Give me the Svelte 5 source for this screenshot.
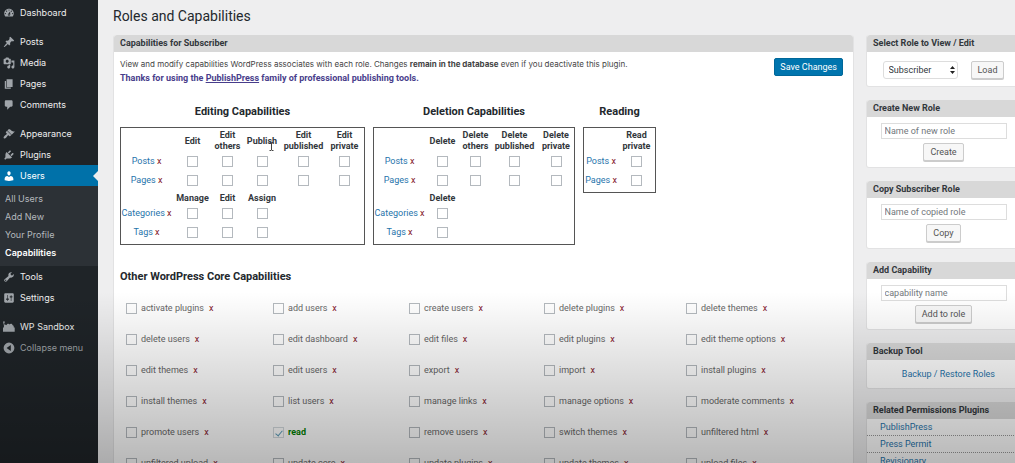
<script>
    const menu = [
        {
            label: "Dashboard",
            icon: "M3.76 16h12.48c1.1-1.37 1.76-3.11 1.76-5 0-4.42-3.58-8-8-8s-8 3.58-8 8c0 1.89.66 3.63 1.76 5zM10 4c.55 0 1 .45 1 1s-.45 1-1 1-1-.45-1-1 .45-1 1-1zM6 6c.55 0 1 .45 1 1s-.45 1-1 1-1-.45-1-1 .45-1 1-1zm8 0c.55 0 1 .45 1 1s-.45 1-1 1-1-.45-1-1 .45-1 1-1zm-5.37 5.55L12 7v6c0 1.1-.9 2-2 2s-2-.9-2-2c0-.57.24-1.08.63-1.45zM4 10c.55 0 1 .45 1 1s-.45 1-1 1-1-.45-1-1 .45-1 1-1zm12 0c.55 0 1 .45 1 1s-.45 1-1 1-1-.45-1-1 .45-1 1-1zm-5 3c0-.55-.45-1-1-1s-1 .45-1 1 .45 1 1 1 1-.45 1-1z",
        },
        {
            label: "Posts",
            gap: true,
            icon: "M10.44 3.02l1.82-1.82 6.36 6.35-1.83 1.82c-1.05-.68-2.48-.57-3.41.36l-.75.75c-.92.93-1.04 2.35-.35 3.41l-1.83 1.82-2.41-2.41-2.8 2.79c-.42.42-3.38 2.71-3.8 2.29s1.86-3.39 2.28-3.81l2.79-2.79L4.1 9.36l1.83-1.82c1.05.69 2.48.57 3.4-.36l.75-.75c.93-.92 1.05-2.35.36-3.41z",
        },
        {
            label: "Media",
            icon: "M13 11V4c0-.55-.45-1-1-1h-1.67L9 1H5L3.67 3H2c-.55 0-1 .45-1 1v7c0 .55.45 1 1 1h10c.55 0 1-.45 1-1zM7 4.5c1.38 0 2.5 1.12 2.5 2.5S8.38 9.5 7 9.5 4.5 8.38 4.5 7 5.62 4.5 7 4.5zM14 6h5v10.5c0 1.38-1.12 2.5-2.5 2.5S14 17.88 14 16.5s1.12-2.5 2.5-2.5c.17 0 .34.02.5.05V9h-3V6zm-4 8.05V13h2v3.5c0 1.38-1.12 2.5-2.5 2.5S7 17.88 7 16.5 8.12 14 9.5 14c.17 0 .34.02.5.05z",
        },
        {
            label: "Pages",
            icon: "M6 15V2h10v13H6zm-1 1h8v2H3V5h2v11z",
        },
        {
            label: "Comments",
            icon: "M5 2h9c1.1 0 2 .9 2 2v7c0 1.1-.9 2-2 2h-2l-5 5v-5H5c-1.1 0-2-.9-2-2V4c0-1.1.9-2 2-2z",
        },
        {
            label: "Appearance",
            gap: true,
            icon: "M14.48 11.06L7.41 3.99l1.5-1.5c.5-.56 2.3-.47 3.51.32 1.21.8 1.43 1.28 2.91 2.1 1.18.64 2.45 1.26 4.45.85zm-.71.71L6.7 4.7 4.93 6.47c-.39.39-.39 1.02 0 1.41l1.06 1.06c.39.39.39 1.03 0 1.42-.6.6-1.43 1.11-2.21 1.69-.35.26-.7.53-1.01.84C1.43 14.23.4 16.08 1.4 17.07c.99 1 2.84-.03 4.18-1.36.31-.31.58-.66.85-1.02.57-.78 1.08-1.61 1.69-2.21.39-.39 1.02-.39 1.41 0l1.06 1.06c.39.39 1.02.39 1.41 0z",
        },
        {
            label: "Plugins",
            icon: "M13.11 4.36L9.87 7.6 8 5.73l3.24-3.24c.35-.34 1.05-.2 1.56.32.52.51.66 1.21.31 1.55zm-8 1.77l.91-1.12 9.01 9.01-1.19.84c-.71.71-2.63 1.16-3.82 1.16H6.14L4.9 17.26c-.59.59-1.54.59-2.12 0-.59-.58-.59-1.53 0-2.12l1.24-1.24v-3.88c0-1.13.4-3.19 1.09-3.89zm7.26 3.97l3.24-3.24c.34-.35 1.04-.21 1.55.31.52.51.66 1.21.31 1.55l-3.24 3.25z",
        },
        {
            label: "Users",
            sub: ["All Users", "Add New", "Your Profile", "Capabilities"],
            icon: "M10 9.25c-2.27 0-2.73-3.44-2.73-3.44C7 4.02 7.82 2 9.97 2c2.16 0 2.98 2.02 2.71 3.81 0 0-.41 3.44-2.68 3.44zm0 2.57L12.72 10c2.39 0 4.52 2.33 4.52 4.53v2.49s-3.65 1.13-7.24 1.13c-3.65 0-7.24-1.13-7.24-1.13v-2.49c0-2.25 1.94-4.48 4.47-4.48z",
        },
        {
            label: "Tools",
            icon: "M16.68 9.77c-1.34 1.34-3.3 1.67-4.95.99l-5.41 6.52c-.99.99-2.59.99-3.58 0s-.99-2.59 0-3.57l6.52-5.42c-.68-1.65-.35-3.61.99-4.95 1.28-1.28 3.12-1.62 4.72-1.06l-2.89 2.89 2.82 2.82 2.86-2.87c.53 1.58.18 3.39-1.08 4.65zM3.81 16.21c.4.39 1.04.39 1.43 0 .4-.4.4-1.04 0-1.43-.39-.4-1.03-.4-1.43 0-.39.39-.39 1.03 0 1.43z",
        },
        {
            label: "Settings",
            icon: "M18 16V4c0-1.1-.9-2-2-2H4c-1.1 0-2 .9-2 2v12c0 1.1.9 2 2 2h12c1.1 0 2-.9 2-2zM8 11h1c.55 0 1 .45 1 1s-.45 1-1 1H8v1.5c0 .28-.22.5-.5.5s-.5-.22-.5-.5V13H6c-.55 0-1-.45-1-1s.45-1 1-1h1V5.5c0-.28.22-.5.5-.5s.5.22.5.5V11zm5-2h-1c-.55 0-1-.45-1-1s.45-1 1-1h1V5.5c0-.28.22-.5.5-.5s.5.22.5.5V7h1c.55 0 1 .45 1 1s-.45 1-1 1h-1v5.5c0 .28-.22.5-.5.5s-.5-.22-.5-.5V9z",
        },
        {
            label: "WP Sandbox",
            gap: true,
            icon: "M0 1h3v2H1.800L3 7c1-1 2-1 3 0c1-3 4-3 5-1c1-2 4-2 5 1c2 0 2 2 2 4h1.500v7H0v-7h1.500V7z",
        },
    ];

    const groups = [
        {
            title: "Editing Capabilities",
            cols: [51, 41, 29, 40, 43, 39],
            sections: [
                {
                    heads: ["Edit", "Edit others", "Publish", "Edit published", "Edit private"],
                    rows: ["Posts", "Pages"],
                },
                {
                    heads: ["Manage", "Edit", "Assign"],
                    rows: ["Categories", "Tags"],
                },
            ],
        },
        {
            title: "Deletion Capabilities",
            cols: [51, 35, 31, 47, 36],
            sections: [
                {
                    heads: ["Delete", "Delete others", "Delete published", "Delete private"],
                    rows: ["Posts", "Pages"],
                },
                {
                    heads: ["Delete"],
                    rows: ["Categories", "Tags"],
                },
            ],
        },
        {
            title: "Reading",
            cols: [34, 37],
            sections: [{ heads: ["Read private"], rows: ["Posts", "Pages"] }],
        },
    ];

    let caps = [
        "activate plugins", "add users", "create users", "delete plugins", "delete themes",
        "delete users", "edit dashboard", "edit files", "edit plugins", "edit theme options",
        "edit themes", "edit users", "export", "import", "install plugins",
        "install themes", "list users", "manage links", "manage options", "moderate comments",
        "promote users", "read", "remove users", "switch themes", "unfiltered html",
        "unfiltered upload", "update core", "update plugins", "update themes", "upload files",
    ].map((name) => ({ name, on: name === "read" }));

    const related = ["PublishPress", "Press Permit", "Revisionary"];

    let role = "Subscriber";
    let newRole = "";
    let copiedRole = "";
    let newCap = "";

    const sum = (list) => list.reduce((a, b) => a + b, 0);
</script>

<div class="page">
    <nav class="sidebar">
        {#each menu as item}
            <a href="#top" class="item" class:gap={item.gap} class:current={item.sub}>
                <svg viewBox="0 0 20 20" fill-rule="evenodd"><path d={item.icon} /></svg>
                {item.label}
            </a>
            {#if item.sub}
                <div class="submenu">
                    {#each item.sub as sub}
                        <a href="#top" class:active={sub === "Capabilities"}>{sub}</a>
                    {/each}
                </div>
            {/if}
        {/each}
        <button class="item collapse">
            <svg viewBox="0 0 20 20" fill-rule="evenodd">
                <path d="M10 1a9 9 0 1 0 0 18a9 9 0 0 0 0-18zM13 5v10l-7-5z" />
            </svg>
            Collapse menu
        </button>
    </nav>

    <main>
        <h1>Roles and Capabilities</h1>
        <div class="columns">
            <section class="panel">
                <h2>Capabilities for {role}</h2>
                <div class="content">
                    <div class="intro">
                        <div>
                            <p class="about">
                                View and modify capabilities WordPress associates with each role. Changes
                                <b>remain in the database</b> even if you deactivate this plugin.
                            </p>
                            <p class="thanks">
                                Thanks for using the <a href="#top">PublishPress</a> family of professional
                                publishing tools.
                            </p>
                        </div>
                        <button class="save">Save Changes</button>
                    </div>

                    <div class="groups">
                        {#each groups as group}
                            <div>
                                <h3>{group.title}</h3>
                                <table style="width: {sum(group.cols) + 2}px">
                                    <colgroup>
                                        {#each group.cols as width}
                                            <col style="width: {width}px" />
                                        {/each}
                                    </colgroup>
                                    {#each group.sections as section}
                                        <tbody>
                                            <tr class="heads">
                                                <td></td>
                                                {#each section.heads as head}
                                                    <th scope="col">
                                                        {head}
                                                        {#if head === "Publish"}
                                                            <svg class="ibeam" viewBox="0 0 5 9">
                                                                <path d="M.5.500h1.500l.5.500l.5-.5h1.500M2.500 1v7M.5 8.500h1.500l.5-.5l.5.500h1.500" />
                                                            </svg>
                                                        {/if}
                                                    </th>
                                                {/each}
                                            </tr>
                                            {#each section.rows as row}
                                                <tr>
                                                    <td><a href="#top">{row}</a> <a href="#top" class="neg">x</a></td>
                                                    {#each section.heads as head}
                                                        <td><input type="checkbox" aria-label="{head} {row}" /></td>
                                                    {/each}
                                                </tr>
                                            {/each}
                                        </tbody>
                                    {/each}
                                </table>
                            </div>
                        {/each}
                    </div>

                    <h3 class="other">Other WordPress Core Capabilities</h3>
                    <div class="caps">
                        {#each caps as cap}
                            <div class="cap" class:on={cap.on}>
                                <label><input type="checkbox" bind:checked={cap.on} />{cap.name}</label>
                                {#if cap.name !== "read"}
                                    <a href="#top" class="neg">x</a>
                                {/if}
                            </div>
                        {/each}
                    </div>
                </div>
            </section>

            <aside>
                <section class="panel">
                    <h2>Select Role to View / Edit</h2>
                    <div class="body row">
                        <div class="select">
                            <select bind:value={role} aria-label="Role">
                                <option>Subscriber</option>
                                <option>Contributor</option>
                                <option>Author</option>
                                <option>Editor</option>
                            </select>
                            <svg viewBox="0 0 5 8"><path d="M2.500 0L5 3H0zM2.500 8L0 5h5z" /></svg>
                        </div>
                        <button>Load</button>
                    </div>
                </section>
                <section class="panel">
                    <h2>Create New Role</h2>
                    <div class="body">
                        <input type="text" placeholder="Name of new role" aria-label="Name of new role" bind:value={newRole} />
                        <button>Create</button>
                    </div>
                </section>
                <section class="panel">
                    <h2>Copy {role} Role</h2>
                    <div class="body">
                        <input type="text" placeholder="Name of copied role" aria-label="Name of copied role" bind:value={copiedRole} />
                        <button>Copy</button>
                    </div>
                </section>
                <section class="panel">
                    <h2>Add Capability</h2>
                    <div class="body">
                        <input type="text" placeholder="capability name" aria-label="Capability name" bind:value={newCap} />
                        <button>Add to role</button>
                    </div>
                </section>
                <section class="panel">
                    <h2>Backup Tool</h2>
                    <div class="backup"><a href="#top">Backup / Restore Roles</a></div>
                </section>
                <section class="panel">
                    <h2>Related Permissions Plugins</h2>
                    <ul>
                        {#each related as plugin}
                            <li><a href="#top">{plugin}</a></li>
                        {/each}
                    </ul>
                </section>
            </aside>
        </div>
    </main>
    <div class="shade"></div>
</div>

<style>
    :global(body) {
        overflow: hidden;
    }
    .page {
        position: relative;
        display: flex;
        height: 100vh;
        overflow: hidden;
        background: #eeeeef;
        color: #444;
        font-family: Inter, "Liberation Sans", sans-serif;
        font-size: 9px;
        line-height: 12px;
    }
    a {
        color: #1f74ab;
        text-decoration: none;
    }
    button,
    input,
    select {
        box-sizing: border-box;
        margin: 0;
        font: inherit;
    }
    h1,
    h2,
    h3,
    p,
    ul {
        margin: 0;
        padding: 0;
    }

    .sidebar {
        flex: none;
        box-sizing: border-box;
        width: 98px;
        padding-top: 2px;
        background: #1f2428;
    }
    .item {
        position: relative;
        display: flex;
        align-items: center;
        gap: 5px;
        box-sizing: border-box;
        width: 100%;
        height: 21px;
        padding: 0 3px;
        color: #eee;
    }
    .item svg {
        width: 12px;
        height: 12px;
        fill: #a0a5aa;
    }
    .gap {
        margin-top: 8px;
    }
    .current {
        background: #0071a9;
        color: #fff;
    }
    .current svg {
        fill: #fff;
    }
    .current::after {
        content: "";
        position: absolute;
        right: 0;
        border: 5px solid transparent;
        border-right-color: #eee;
        border-left-width: 0;
    }
    .submenu {
        display: flex;
        flex-direction: column;
        padding: 4px 5px;
        background: #2c3136;
    }
    .submenu a {
        line-height: 18px;
        color: #b4b9be;
    }
    .submenu .active {
        color: #fff;
        font-weight: 600;
    }
    .collapse {
        border: 0;
        background: none;
        color: #a0a5aa;
    }

    main {
        flex: 1;
        min-width: 0;
        padding: 6px 0 0 15px;
        font-family: Roboto, "Liberation Sans", sans-serif;
    }
    h1 {
        padding-bottom: 9px;
        color: #23282d;
        font-size: 14px;
        font-weight: 400;
        line-height: 20px;
    }
    .columns {
        display: grid;
        grid-template-columns: 1fr 155px;
        gap: 12px;
        align-items: start;
        margin-right: -6px;
    }
    .panel {
        box-sizing: border-box;
        border: 1px solid #e2e2e3;
        border-top: 0;
        border-radius: 3px;
        background: #fff;
    }
    h2 {
        padding: 0 6px;
        border-radius: 3px 3px 0 0;
        background: #d8d8d8;
        color: #32373c;
        font-size: 9px;
        font-weight: 700;
        line-height: 17px;
    }
    .content {
        padding: 5px 10px 20px 6px;
    }
    .intro {
        display: flex;
        justify-content: space-between;
        align-items: start;
    }
    .intro p {
        line-height: 14px;
    }
    .about {
        font-family: Inter, "Liberation Sans", sans-serif;
        font-size: 8px;
    }
    .thanks,
    .thanks a {
        color: #483d8b;
        font-weight: 700;
    }
    .thanks a {
        text-decoration: underline;
    }
    .save {
        height: 18px;
        margin-top: 1px;
        padding: 0 5px;
        border: 1px solid #006799;
        border-radius: 2px;
        background: #0075ae;
        color: #fff;
    }
    .groups {
        display: flex;
        align-items: start;
        gap: 8px;
        padding-top: 19px;
    }
    h3 {
        color: #23282d;
        font-size: 11px;
        font-weight: 700;
        line-height: 15px;
    }
    .groups h3 {
        padding-bottom: 8px;
        text-align: center;
    }
    table {
        box-sizing: border-box;
        border: 1px solid #555;
        border-collapse: separate;
        border-spacing: 0;
        table-layout: fixed;
        padding: 2px 0;
    }
    th,
    td {
        height: 19px;
        padding: 0;
        text-align: center;
        line-height: 11px;
        white-space: nowrap;
    }
    th {
        position: relative;
        color: #32373c;
        font-weight: 700;
        white-space: normal;
    }
    .heads td,
    .heads th {
        height: 22px;
    }
    tbody + tbody .heads td,
    tbody + tbody .heads th {
        height: 14px;
        vertical-align: bottom;
    }
    .neg {
        color: #84142a;
    }
    .ibeam {
        position: absolute;
        right: 8px;
        bottom: 1px;
        width: 5px;
        height: 9px;
        fill: none;
        stroke: #444;
        stroke-width: 1;
    }
    input[type="checkbox"] {
        display: inline-grid;
        place-content: center;
        width: 11px;
        height: 11px;
        border: 1px solid #b4b9be;
        background: #fff;
        appearance: none;
        vertical-align: middle;
    }
    .caps input[type="checkbox"] {
        background: none;
    }
    input[type="checkbox"]:checked {
        border-color: #d4dade;
    }
    input[type="checkbox"]:checked::before {
        content: "";
        width: 3px;
        height: 6px;
        border: solid #5b9cb8;
        border-width: 0 1px 1px 0;
        transform: rotate(40deg);
    }
    .other {
        padding: 24px 0 16px;
    }
    .caps {
        display: grid;
        grid-template-columns: 147fr 136fr 135fr 142fr 157fr;
        padding-left: 6px;
    }
    .cap {
        display: flex;
        gap: 5px;
        height: 31px;
        line-height: 16px;
        white-space: nowrap;
        color: #666;
    }
    .cap label {
        display: flex;
        align-items: center;
        gap: 4px;
        height: 16px;
    }
    .cap.on {
        color: #008000;
        font-weight: 700;
    }

    aside {
        display: flex;
        flex-direction: column;
        gap: 13px;
    }
    .body {
        display: flex;
        flex-direction: column;
        align-items: center;
        gap: 4px;
        padding: 6px 0;
    }
    .row {
        flex-direction: row;
        justify-content: center;
        gap: 13px;
        padding: 9px 0 7px;
    }
    .body input {
        width: 126px;
        height: 16px;
        padding: 0 3px;
        border: 1px solid #ddd;
        background: #fff;
        color: #32373c;
    }
    .body input::placeholder {
        color: #72777c;
    }
    .body button {
        height: 18px;
        padding: 0 6px;
        border: 1px solid #ccc;
        border-radius: 2px;
        background: #f7f7f7;
        box-shadow: 0 1px 0 #ccc;
        color: #555;
    }
    .select {
        position: relative;
    }
    .select select {
        width: 75px;
        height: 18px;
        padding: 0 5px;
        border: 1px solid #ddd;
        border-radius: 3px;
        background: #fff;
        color: #32373c;
        appearance: none;
    }
    .select svg {
        position: absolute;
        top: 5px;
        right: 3px;
        width: 5px;
        height: 8px;
        fill: #222;
        pointer-events: none;
    }
    .backup {
        padding: 8px 25px 8px 0;
        text-align: right;
    }
    ul {
        list-style: none;
    }
    li {
        padding: 0 13px;
        border-bottom: 1px dotted #999;
        line-height: 16px;
    }

    /* fade that darkens the foot of the window */
    .shade {
        position: absolute;
        inset: 63% 0 0;
        background: linear-gradient(rgba(0, 0, 0, 0), rgba(0, 0, 0, 0.28));
        pointer-events: none;
    }
</style>
